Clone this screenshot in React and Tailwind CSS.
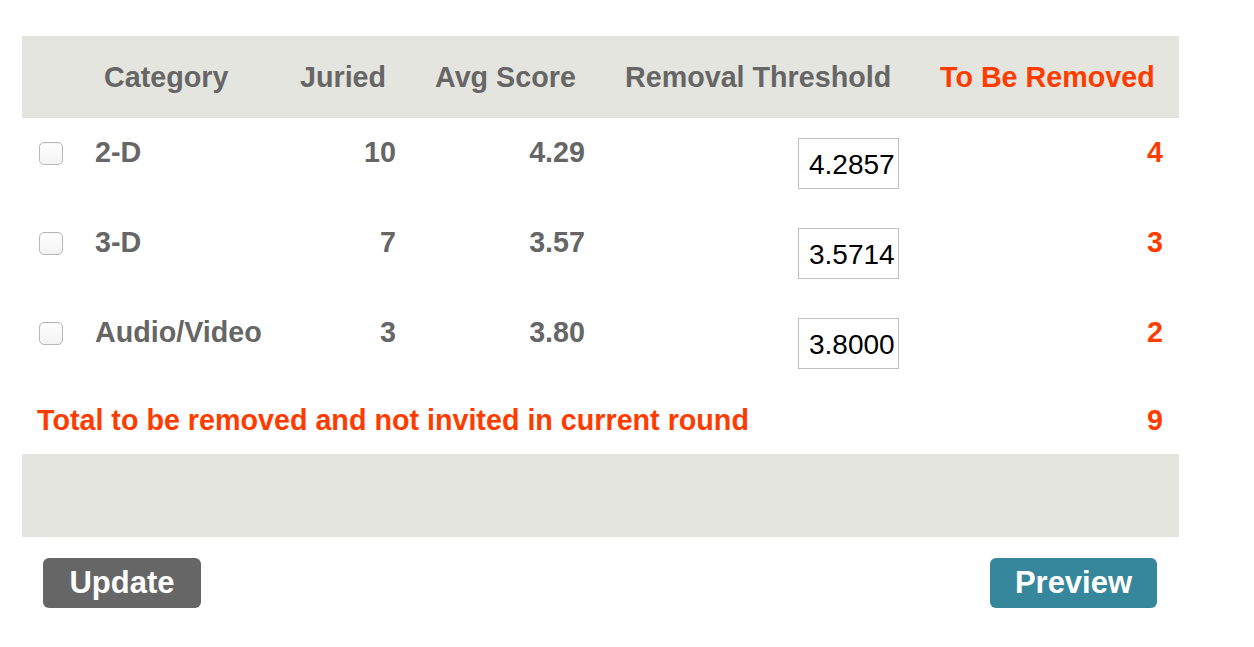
import { useState } from "react";

const rows = [
  { name: "2-D", juried: 10, avg: "4.29", threshold: "4.2857", removed: 4 },
  { name: "3-D", juried: 7, avg: "3.57", threshold: "3.5714", removed: 3 },
  { name: "Audio/Video", juried: 3, avg: "3.80", threshold: "3.8000", removed: 2 },
];

const cols = "grid grid-cols-[63px_205px_116px_189px_315px_269px]";

export default function App() {
  const [values, setValues] = useState(rows.map((r) => r.threshold));

  return (
    <div className="min-h-screen bg-white pt-[36px] font-['Liberation_Sans',Arial,sans-serif]">
      <div className="ml-[22px] w-[1157px]">
        {/* Header */}
        <div className={`${cols} bg-[#e5e5df] h-[82px] pt-[25px] text-[28.7px] leading-[32px] font-bold text-[#666666]`}>
          <div />
          <div className="pl-[19px]">Category</div>
          <div className="pl-[10px]">Juried</div>
          <div className="pl-[29px] whitespace-nowrap">Avg Score</div>
          <div className="pl-[30px] whitespace-nowrap">Removal Threshold</div>
          <div className="pl-[30px] text-[#ff3c00] whitespace-nowrap">To Be Removed</div>
        </div>

        {/* Rows */}
        {rows.map((row, i) => (
          <div
            key={row.name}
            className={`${cols} items-start h-[90px] pt-[18px] text-[28.7px] leading-[32px] font-bold text-[#666666]`}
          >
            <div className="pl-[17px] pt-[6px] flex">
              <input
                type="checkbox"
                className="appearance-none w-[24px] h-[23px] border border-[#b8b8b8] rounded-[5px] bg-gradient-to-b from-white to-[#f3f3f3] shadow-[inset_0_1px_1px_rgba(0,0,0,0.05)]"
              />
            </div>
            <div className="pl-[10px] whitespace-nowrap">{row.name}</div>
            <div className="text-right pr-[10px]">{row.juried}</div>
            <div className="text-right pr-[10px]">{row.avg}</div>
            <div className="flex justify-end pr-[11px] pt-[2px]">
              <input
                type="text"
                value={values[i]}
                onChange={(e) => {
                  const next = [...values];
                  next[i] = e.target.value;
                  setValues(next);
                }}
                className="w-[101px] h-[51px] border border-[#c0c0c0] pl-[10px] pr-0 pt-[3px] text-[28px] font-normal text-black bg-white outline-none"
              />
            </div>
            <div className="text-right pr-[16px] text-[#ff3c00]">{row.removed}</div>
          </div>
        ))}

        {/* Total */}
        <div className="flex justify-between h-[66px] pt-[16px] pl-[15px] pr-[16px] text-[28.7px] leading-[32px] font-bold text-[#ff3c00]">
          <span>Total to be removed and not invited in current round</span>
          <span>9</span>
        </div>

        {/* Footer band */}
        <div className="h-[83px] bg-[#e5e5df]" />

        {/* Buttons */}
        <div className="flex justify-between mt-[21px] pl-[21px] pr-[22px]">
          <button
            type="button"
            className="w-[158px] h-[50px] rounded-[6px] bg-[#666666] text-white text-[31px] font-bold flex items-center justify-center"
          >
            Update
          </button>
          <button
            type="button"
            className="w-[167px] h-[50px] rounded-[6px] bg-[#36879b] text-white text-[31px] font-bold flex items-center justify-center"
          >
            Preview
          </button>
        </div>
      </div>
    </div>
  );
}
